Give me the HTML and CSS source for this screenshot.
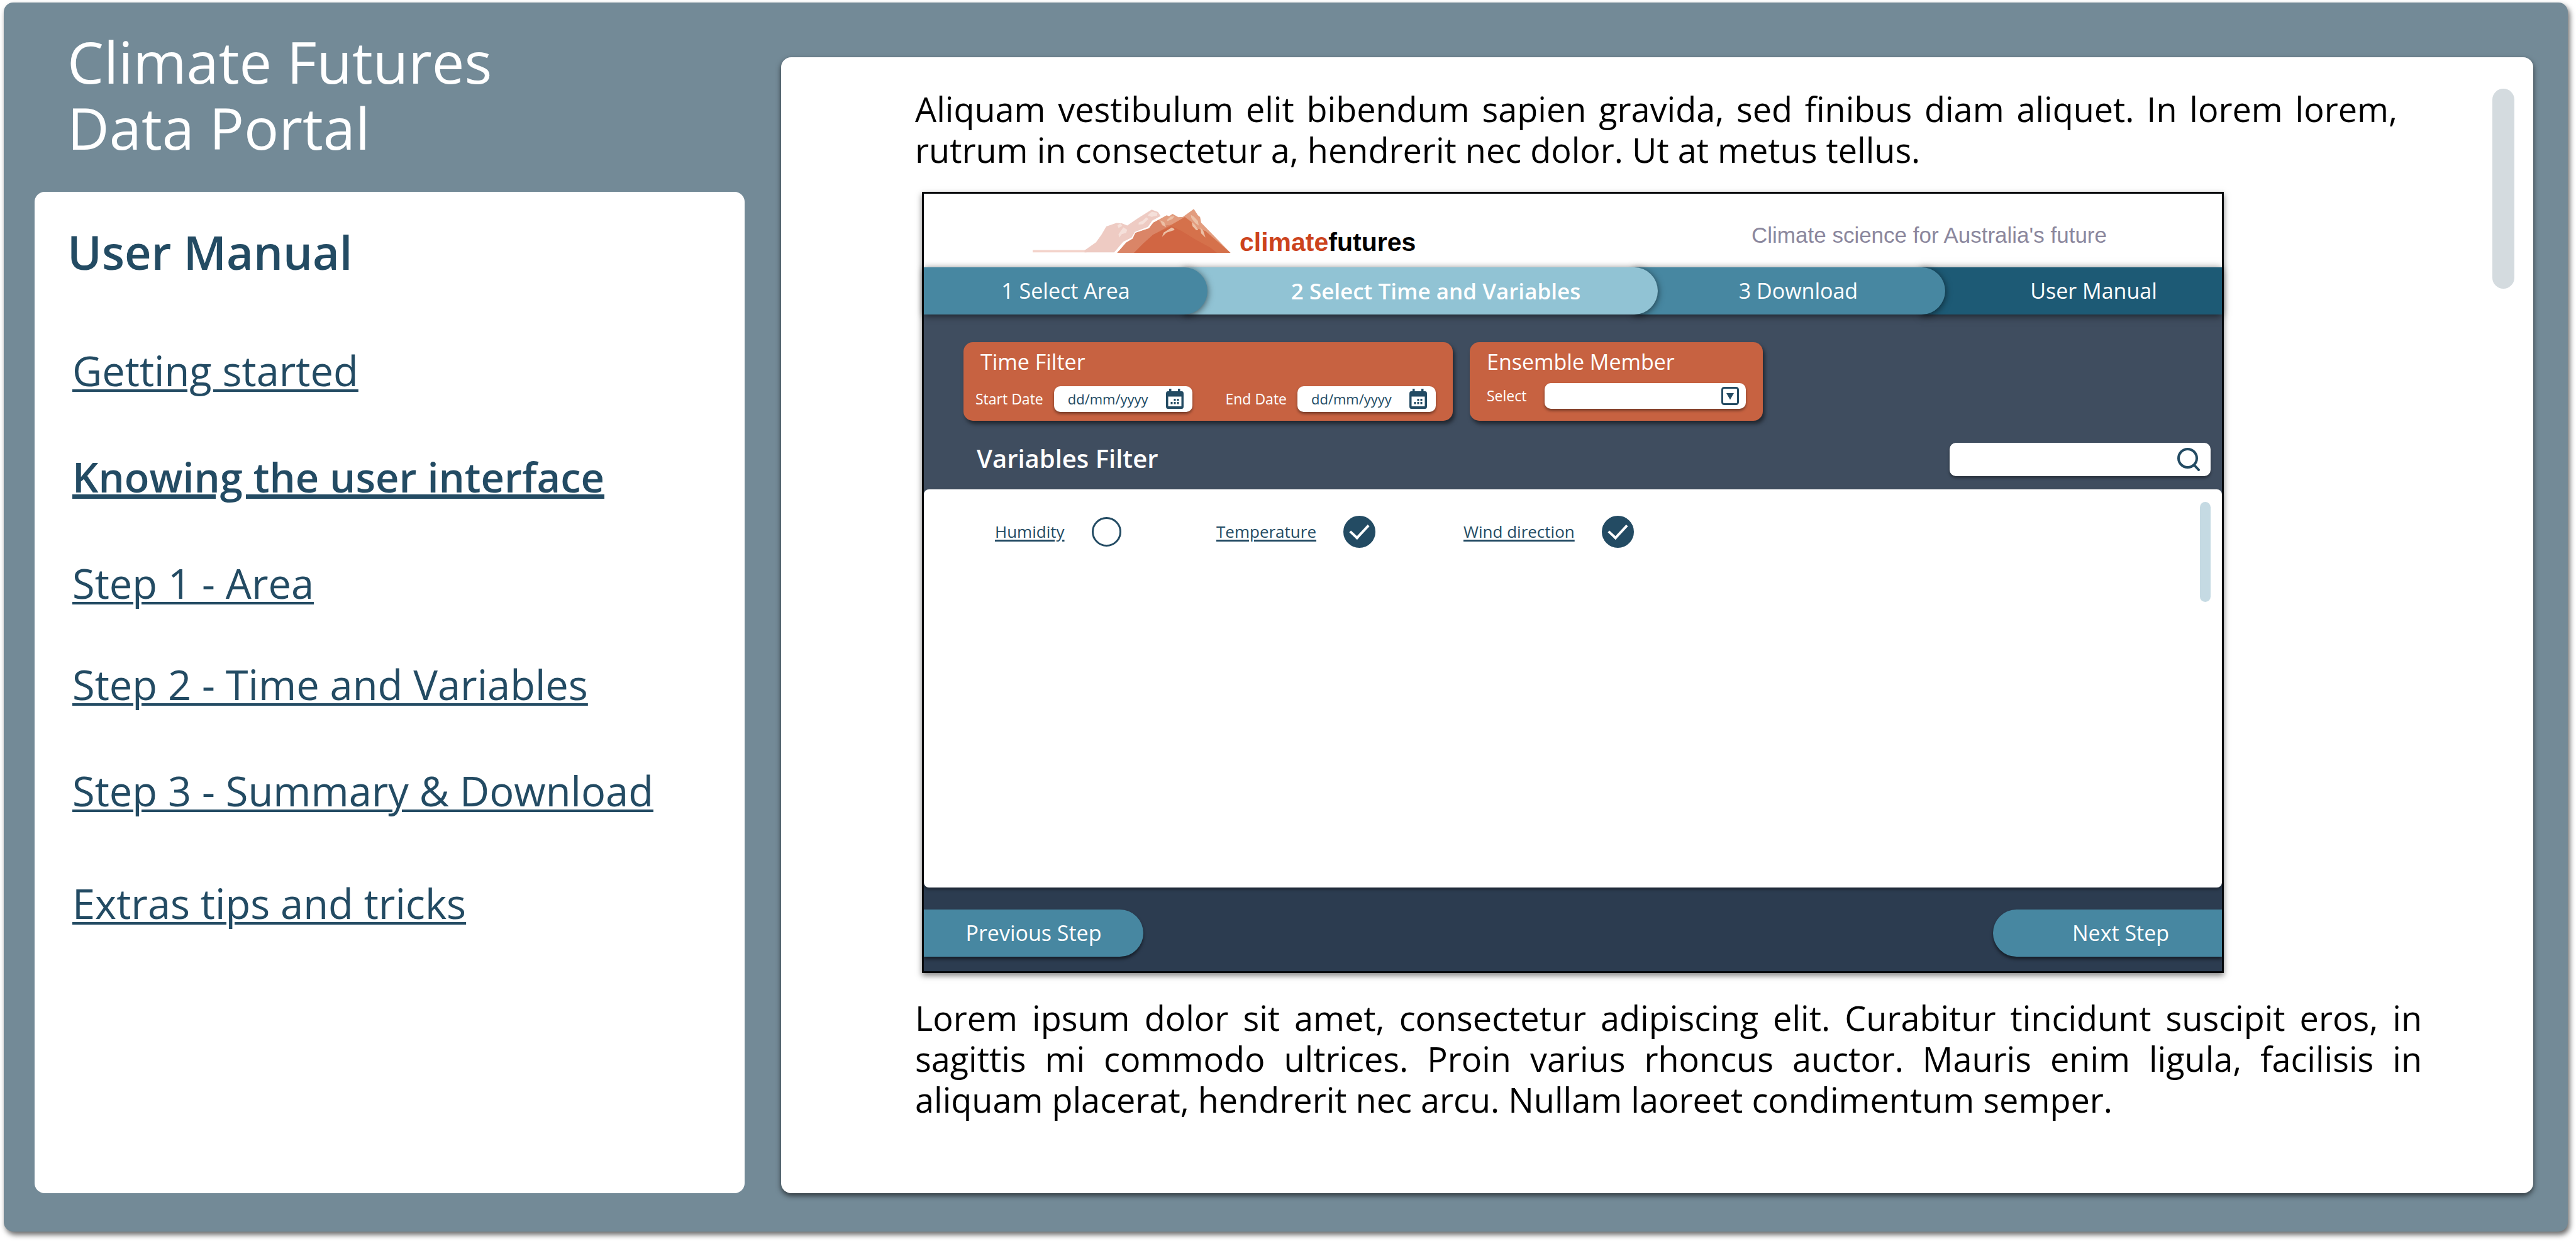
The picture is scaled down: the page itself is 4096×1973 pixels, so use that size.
FILE: index.html
```html
<!DOCTYPE html>
<html lang="en">
<head>
<meta charset="utf-8">
<meta name="viewport" content="width=device-width, initial-scale=1">
<title>Climate Futures Data Portal - User Manual</title>
<link rel="stylesheet" href="styles.css">
</head>
<body>
<div class="frame">
  <aside class="sidebar">
    <h1 class="site-title">Climate Futures<br>Data Portal</h1>
    <nav class="manual" aria-labelledby="manual-title">
      <h2 class="manual-title" id="manual-title">User Manual</h2>
      <ul class="manual-list">
        <li><a href="#getting-started">Getting started</a></li>
        <li><a class="current" href="#interface" aria-current="page">Knowing the user interface</a></li>
        <li><a href="#step-1">Step 1 - Area</a></li>
        <li class="tight"><a href="#step-2">Step 2 - Time and Variables</a></li>
        <li><a href="#step-3">Step 3 - Summary &amp; Download</a></li>
        <li class="loose"><a href="#extras">Extras tips and tricks</a></li>
      </ul>
    </nav>
  </aside>

  <main class="content">
    <article class="article">
      <p class="lead">Aliquam vestibulum elit bibendum sapien gravida, sed finibus diam aliquet. In lorem lorem, rutrum in consectetur a, hendrerit nec dolor. Ut at metus tellus.</p>

      <div class="app">
        <header class="app-header">
          <div class="logo">
            <svg class="logo-mark" viewBox="92 118 729 342" preserveAspectRatio="none" aria-hidden="true">
              <path fill="#f3d3cb" d="M92 438H290V456H92Z"/>
              <path fill="#eecbc3" d="M283 441L325 378L345 320L363 255L400 228L420 230L440 248L480 190L530 124L553 143L563 174L532 210L516 258L468 298L456 342L425 375L392 456H283Z"/>
              <path fill="#f5e0da" d="M519 160L531 140L551 150L550 170L530 180L516 172ZM482 225L497 210L510 184L518 198L498 238L482 240ZM404 245L415 232L422 250L408 267ZM426 262L440 280L436 305L420 315L410 342L408 315Z"/>
              <path fill="#e29c7e" d="M403 460L436 380L460 350L470 305L520 270L536 225L585 168L594 175L607 157L628 183L645 180L685 119L700 168L708 182L712 225L820 460Z"/>
              <path fill="#da8567" d="M403 460L436 380L460 350L470 305L520 270L536 225L556 203L570 250L610 240L580 460Z"/>
              <path fill="#d5714b" d="M465 460L500 385L535 320L600 245L652 182L680 225L695 270L728 290L820 460Z"/>
              <path fill="#d16643" d="M465 460L500 385L535 320L603 252L640 290L690 355L745 418L770 460Z"/>
              <path fill="#ecc0a6" d="M586 204L600 178L614 177L606 198L588 213ZM562 208L576 222L583 262L568 240ZM604 262L614 275L612 284L585 302L568 335L574 302ZM674 164L686 180L700 212L703 248L690 228L676 190ZM677 220L688 240L702 282L694 284L680 252ZM709 262L720 290L728 342L712 308Z"/>
            </svg>
            <span class="wordmark"><span class="wordmark-accent">climate</span>futures</span>
          </div>
          <p class="tagline">Climate science for Australia's future</p>
        </header>

        <nav class="tabs" aria-label="Steps">
          <a class="tab tab-area" href="#area">1 Select Area</a>
          <a class="tab tab-variables" href="#variables" aria-current="step">2 Select Time and Variables</a>
          <a class="tab tab-download" href="#download">3 Download</a>
          <a class="tab tab-manual" href="#manual">User Manual</a>
        </nav>

        <div class="workspace">
          <div class="filters">
            <section class="card card-time">
              <h3 class="card-title">Time Filter</h3>
              <div class="fields">
                <label for="start-date">Start Date</label>
                <span class="control control-date">
                  <input id="start-date" type="text" placeholder="dd/mm/yyyy">
                  <svg class="icon-calendar" viewBox="0 0 28 32" aria-hidden="true"><path fill="#234b63" fill-rule="evenodd" d="M5 0H8.500V4H19V0H22.500V4H25Q28 4 28 8V28Q28 32 25 32H3Q0 32 0 28V8Q0 4 3 4H5ZM3.500 12.500V28H24.500V12.500Z"/><path fill="#234b63" d="M12.500 16h3v3.500h-3zM17.500 16h3v3.500h-3zM7.500 21h3v3.500h-3zM12.500 21h3v3.500h-3zM17.500 21h3v3.500h-3z"/></svg>
                </span>
                <label class="label-end" for="end-date">End Date</label>
                <span class="control control-date">
                  <input id="end-date" type="text" placeholder="dd/mm/yyyy">
                  <svg class="icon-calendar" viewBox="0 0 28 32" aria-hidden="true"><path fill="#234b63" fill-rule="evenodd" d="M5 0H8.500V4H19V0H22.500V4H25Q28 4 28 8V28Q28 32 25 32H3Q0 32 0 28V8Q0 4 3 4H5ZM3.500 12.500V28H24.500V12.500Z"/><path fill="#234b63" d="M12.500 16h3v3.500h-3zM17.500 16h3v3.500h-3zM7.500 21h3v3.500h-3zM12.500 21h3v3.500h-3zM17.500 21h3v3.500h-3z"/></svg>
                </span>
              </div>
            </section>
            <section class="card card-member">
              <h3 class="card-title">Ensemble Member</h3>
              <div class="fields">
                <label for="member">Select</label>
                <span class="control control-select">
                  <select id="member"><option></option></select>
                  <svg class="icon-drop" viewBox="0 0 28 29" aria-hidden="true"><rect x="1.500" y="1.500" width="25" height="26" rx="3" fill="none" stroke="#234b63" stroke-width="3"/><path fill="#234b63" d="M8 10H20L14 20.500Z"/></svg>
                </span>
              </div>
            </section>
          </div>

          <div class="toolbar">
            <h3 class="toolbar-title">Variables Filter</h3>
            <span class="control control-search">
              <input type="search" aria-label="Search variables">
              <svg class="icon-search" viewBox="0 0 36 37" aria-hidden="true"><g fill="none" stroke="#234b63" stroke-width="4" stroke-linecap="round"><circle cx="16.500" cy="16.500" r="14.500"/><path d="M27.500 28L34 35"/></g></svg>
            </span>
          </div>

          <div class="canvas">
            <ul class="variables">
              <li><a id="var-humidity" href="#humidity">Humidity</a><input type="checkbox" aria-labelledby="var-humidity"></li>
              <li><a id="var-temperature" href="#temperature">Temperature</a><input type="checkbox" aria-labelledby="var-temperature" checked></li>
              <li><a id="var-wind" href="#wind">Wind direction</a><input type="checkbox" aria-labelledby="var-wind" checked></li>
            </ul>
            <div class="canvas-scroll"></div>
          </div>
        </div>

        <footer class="app-footer">
          <button class="step step-prev" type="button">Previous Step</button>
          <button class="step step-next" type="button">Next Step</button>
        </footer>
      </div>

      <p class="closing">Lorem ipsum dolor sit amet, consectetur adipiscing elit. Curabitur tincidunt suscipit eros, in sagittis mi commodo ultrices. Proin varius rhoncus auctor. Mauris enim ligula, facilisis in aliquam placerat, hendrerit nec arcu. Nullam laoreet condimentum semper.</p>
    </article>
    <div class="page-scroll"></div>
  </main>
</div>
</body>
</html>
```
FILE: styles.css
```css
:root {
  --navy: #234b63;
  --slate: #738a97;
  --teal: #4787a1;
  --orange: #c76241;
}

* {
  box-sizing: border-box;
}

body {
  display: flex;
  min-height: 100vh;
  margin: 0;
  padding: 4px 13px 15px 6px;
  background: #fff;
  color: #000;
  font-family: "Trebuchet MS", "Open Sans", "Noto Sans", sans-serif;
}

h1, h2, h3, p, ul {
  margin: 0;
  padding: 0;
}

ul {
  list-style: none;
}

input, select, button {
  border: 0;
  font: inherit;
}

/* Outer frame */
.frame {
  display: grid;
  flex: 1;
  grid-template-columns: 1129fr 2786fr;
  gap: 58px;
  padding: 0 55px 61px 49px;
  border-radius: 15px;
  background: var(--slate);
  box-shadow: 3px 5px 9px rgba(0, 0, 0, .6);
}

/* Sidebar */
.sidebar {
  display: flex;
  flex-direction: column;
}

.site-title {
  padding: 41px 52px 50px;
  color: #fff;
  font-size: 92px;
  font-weight: 400;
  line-height: 105px;
}

.manual {
  flex: 1;
  padding: 48px 52px;
  border-radius: 16px;
  background: #fff;
  color: var(--navy);
}

.manual-title {
  font-size: 74px;
  font-weight: 600;
  line-height: 96px;
}

.manual-list {
  padding: 95px 0 0 8px;
  font-size: 65px;
  line-height: 90px;
}

.manual-list li + li {
  margin-top: 79px;
}

.manual-list li.tight {
  margin-top: 71px;
}

.manual-list li.loose {
  margin-top: 89px;
}

.manual-list a {
  color: inherit;
  text-decoration-thickness: 4px;
  text-underline-offset: 5px;
  white-space: nowrap;
}

.manual-list .current {
  font-weight: 600;
  text-decoration-thickness: 7px;
  text-underline-offset: 3px;
}

/* Article */
.content {
  display: flex;
  align-items: flex-start;
  margin-top: 87px;
  padding: 50px 30px 50px 213px;
  border-radius: 16px;
  background: #fff;
  box-shadow: 0 4px 9px rgba(0, 0, 0, .6);
}

.article {
  flex: 1;
  min-width: 0;
  margin-right: 112px;
  font-size: 54px;
  line-height: 65px;
  text-align: justify;
}

.lead {
  padding-right: 39px;
}

.page-scroll {
  width: 35px;
  height: 318px;
  border-radius: 18px;
  background: #d4dbdf;
}

/* Application preview */
.app {
  margin: 34px 315px 39px 11px;
  border: 3px solid #06090d;
  background: #2c3c50;
  box-shadow: 0 4px 9px rgba(0, 0, 0, .5);
  text-align: left;
}

.app-header {
  display: flex;
  align-items: flex-end;
  justify-content: space-between;
  height: 117px;
  padding: 0 183px 23px 173px;
  background: #fff;
  font-family: "Liberation Sans", Arial, sans-serif;
}

.logo {
  display: flex;
  align-items: flex-end;
  gap: 14px;
}

.logo-mark {
  width: 315px;
  height: 70px;
}

.wordmark {
  font-size: 41px;
  font-weight: 700;
  line-height: 34px;
}

.wordmark-accent {
  color: #cc431d;
}

.tagline {
  color: #8b879d;
  font-size: 35px;
  line-height: 56px;
}

.tabs {
  position: relative;
  z-index: 1;
  display: grid;
  grid-template-columns: 451fr 716fr 457fr 440fr;
  height: 75px;
  font-size: 34px;
  line-height: 75px;
  text-align: center;
}

.tab {
  position: relative;
  margin-left: -38px;
  padding-left: 48px;
  border-radius: 0 38px 38px 0;
  background: var(--teal);
  box-shadow: 0 2px 12px rgba(0, 0, 0, .6);
  color: #fff;
  text-decoration: none;
}

.tab-area {
  z-index: 3;
  margin-left: 0;
  padding-left: 0;
}

.tab-variables {
  z-index: 2;
  background: #91c3d4;
  font-size: 35px;
  font-weight: 600;
}

.tab-download {
  z-index: 1;
  padding-left: 28px;
}

.tab-manual {
  padding-left: 70px;
  border-radius: 0;
  background: #1d5a75;
}

.workspace {
  padding-top: 44px;
  background: linear-gradient(#3f4d5f 50%, #2c3c50 50%);
}

.filters {
  display: flex;
  gap: 27px;
  padding-left: 63px;
}

.card {
  padding: 7px 27px 0;
  border-radius: 15px;
  background: var(--orange);
  box-shadow: 3px 5px 6px rgba(0, 0, 0, .5);
  color: #fff;
}

.card-time {
  width: 778px;
  height: 125px;
}

.card-member {
  width: 466px;
}

.card-title {
  font-size: 34px;
  font-weight: 400;
  line-height: 48px;
}

.fields {
  display: flex;
  align-items: center;
  margin-top: 10px;
  font-size: 23px;
  line-height: 41px;
}

.card-time .fields {
  gap: 17px;
  margin: 15px 0 0 -8px;
}

.card-member .fields {
  justify-content: space-between;
}

.label-end {
  margin-left: auto;
}

.control {
  position: relative;
  display: block;
}

.control input,
.control select {
  display: block;
  width: 100%;
  height: 41px;
  border-radius: 10px;
  appearance: none;
  background: #fff;
  box-shadow: 0 3px 4px rgba(0, 0, 0, .4);
  color: var(--navy);
}

.control svg {
  position: absolute;
  pointer-events: none;
}

.control-date {
  width: 220px;
}

.control-date input {
  padding: 0 60px 0 22px;
  font-size: 22px;
}

.control input::placeholder {
  color: var(--navy);
  opacity: 1;
}

.icon-calendar {
  top: 4px;
  right: 14px;
  width: 28px;
  height: 32px;
}

.control-select {
  width: 320px;
}

.icon-drop {
  top: 6px;
  right: 11px;
  width: 28px;
  height: 29px;
}

.toolbar {
  display: flex;
  align-items: center;
  justify-content: space-between;
  padding: 35px 18px 21px 84px;
}

.toolbar-title {
  padding-bottom: 4px;
  color: #fff;
  font-size: 40px;
  font-weight: 600;
  line-height: 49px;
}

.control-search {
  width: 415px;
}

.control-search input {
  height: 53px;
  padding: 0 64px 0 20px;
  font-size: 26px;
}

.icon-search {
  top: 8px;
  right: 17px;
  width: 36px;
  height: 37px;
}

.canvas {
  display: flex;
  justify-content: space-between;
  min-height: 633px;
  padding: 20px 18px 20px 113px;
  border-radius: 8px;
  background: #fff;
  box-shadow: 0 3px 5px rgba(0, 0, 0, .4);
}

.variables {
  display: grid;
  grid-template-columns: 352px 393px auto;
  align-content: start;
  padding-top: 22px;
  font-size: 26px;
  line-height: 51px;
}

.variables li {
  display: flex;
  align-items: center;
  gap: 43px;
}

.variables a {
  color: var(--navy);
  text-decoration-thickness: 3px;
  text-underline-offset: 3px;
}

.variables input {
  display: grid;
  place-items: center;
  width: 47px;
  height: 47px;
  margin: 2px 0;
  border: 3px solid var(--navy);
  border-radius: 50%;
  appearance: none;
  background: #fff;
}

.variables input:checked {
  width: 51px;
  height: 51px;
  margin: 0;
  background: var(--navy);
}

.variables input:checked::after {
  width: 13px;
  height: 25px;
  margin-bottom: 8px;
  border: solid #fff;
  border-width: 0 4px 4px 0;
  content: "";
  transform: rotate(43deg);
}

.canvas-scroll {
  width: 17px;
  height: 159px;
  border-radius: 9px;
  background: #c5dae3;
}

.app-footer {
  display: flex;
  justify-content: space-between;
  padding: 35px 0 23px;
}

.step {
  height: 75px;
  background: var(--teal);
  box-shadow: 0 4px 5px rgba(0, 0, 0, .5);
  color: #fff;
  font-size: 34px;
}

.step-prev {
  width: 349px;
  padding: 0;
  border-radius: 0 38px 38px 0;
}

.step-next {
  width: 364px;
  padding: 0 0 0 42px;
  border-radius: 38px 0 0 38px;
}
```
